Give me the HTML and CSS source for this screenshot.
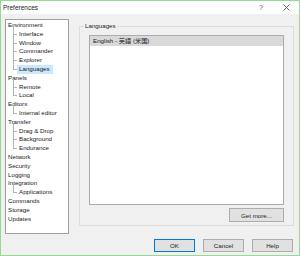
FILE: index.html
```html
<!DOCTYPE html>
<html lang="en">
<head>
    <meta charset="UTF-8">
    <title>Preferences</title>
    <link rel="stylesheet" href="styles.css">
</head>
<body>

<div class="window">
    <div class="titlebar">
        <span class="title">Preferences</span>
        <span class="caption-btn help-btn">?</span>
        <span class="caption-btn close-btn">
            <svg width="7" height="7" viewBox="0 0 7 7"><path d="M0.5 0.5 L6.5 6.5 M6.5 0.5 L0.5 6.5" stroke="#555" stroke-width="0.9" fill="none"/></svg>
        </span>
    </div>

    <div class="content">
        <ul class="tree">
            <li class="node">Environment</li>
            <li class="leaf">Interface</li>
            <li class="leaf">Window</li>
            <li class="leaf">Commander</li>
            <li class="leaf">Explorer</li>
            <li class="leaf last"><span class="selected">Languages</span></li>
            <li class="node">Panels</li>
            <li class="leaf">Remote</li>
            <li class="leaf last">Local</li>
            <li class="node">Editors</li>
            <li class="leaf last">Internal editor</li>
            <li class="node">Transfer</li>
            <li class="leaf">Drag &amp; Drop</li>
            <li class="leaf">Background</li>
            <li class="leaf last">Endurance</li>
            <li class="node">Network</li>
            <li class="node">Security</li>
            <li class="node">Logging</li>
            <li class="node">Integration</li>
            <li class="leaf last">Applications</li>
            <li class="node">Commands</li>
            <li class="node">Storage</li>
            <li class="node">Updates</li>
        </ul>

        <fieldset class="group">
            <legend>Languages</legend>
            <div class="listbox">
                <div class="list-item">English - 英語 (米国)</div>
            </div>
            <div class="group-actions">
                <button class="btn btn-more">Get more...</button>
            </div>
        </fieldset>
    </div>

    <div class="footer">
        <button class="btn btn-default">OK</button>
        <button class="btn">Cancel</button>
        <button class="btn">Help</button>
    </div>
</div>

</body>
</html>
```

FILE: styles.css
```css
* {
    margin: 0;
    padding: 0;
    box-sizing: border-box;
}
body {
    font-family: "Liberation Sans", Arial, "Noto Sans CJK JP", sans-serif;
    font-size: 6.2px;
    color: #1a1a1a;
    background: #fff;
}
.window {
    width: 300px;
    height: 256px;
    border: 1px solid #95d995;
    background-color: #f0f0f0;
    display: flex;
    flex-direction: column;
}
.titlebar {
    flex-shrink: 0;
    height: 13px;
    background-color: #fff;
    display: flex;
    align-items: center;
    padding-left: 2px;
}
.title {
    flex: 1;
    font-size: 6.5px;
    color: #222;
}
.caption-btn {
    width: 24px;
    text-align: center;
    color: #555;
    font-size: 7px;
    display: flex;
    justify-content: center;
    align-items: center;
}
.close-btn {
    width: 26px;
}
.content {
    flex-shrink: 0;
    display: flex;
    align-items: flex-start;
    padding: 5px 5px 0 4px;
}
.tree {
    list-style: none;
    width: 64px;
    height: 215px;
    background-color: #fff;
    border: 1px solid #a0a0a0;
    padding: 1px 0 0 2px;
}
.tree li {
    height: 8.8px;
    line-height: 8.8px;
    white-space: nowrap;
    position: relative;
}
.leaf {
    padding-left: 11px;
}
.leaf::before {
    content: "";
    position: absolute;
    left: 5px;
    top: -4px;
    height: 8.8px;
    border-left: 1px solid #b4b4b4;
}
.leaf::after {
    content: "";
    position: absolute;
    left: 5px;
    top: 4px;
    width: 4px;
    border-top: 1px solid #b4b4b4;
}
.leaf.last::before {
    height: 8.4px;
}
.selected {
    display: inline-block;
    background-color: #cce8ff;
    margin-left: -2px;
    padding: 0 3px 0 2px;
    height: 9px;
}
.group {
    flex: 1;
    margin-left: 10px;
    margin-top: 3px;
    height: 204px;
    border: 1px solid #dcdcdc;
    padding: 0 9px 3px 9px;
    display: flex;
    flex-direction: column;
}
.group legend {
    margin-left: -5px;
    padding: 0 1px;
    line-height: 8px;
    color: #222;
}
.listbox {
    height: 170px;
    margin-top: 5px;
    background-color: #fff;
    border: 1px solid #acacac;
}
.list-item {
    height: 10px;
    line-height: 10px;
    background-color: #d9d9d9;
    padding-left: 3px;
}
.group-actions {
    display: flex;
    justify-content: flex-end;
    margin-top: 3px;
}
.btn {
    font-family: inherit;
    font-size: 6.2px;
    width: 41px;
    height: 13px;
    background-color: #e1e1e1;
    border: 1px solid #adadad;
    color: #222;
}
.btn-more {
    width: 55px;
    height: 14px;
}
.btn-default {
    border: 1px solid #0078d7;
}
.footer {
    flex-shrink: 0;
    display: flex;
    justify-content: flex-end;
    gap: 8px;
    padding: 0 6px 0 0;
    margin-top: 5px;
}
```
